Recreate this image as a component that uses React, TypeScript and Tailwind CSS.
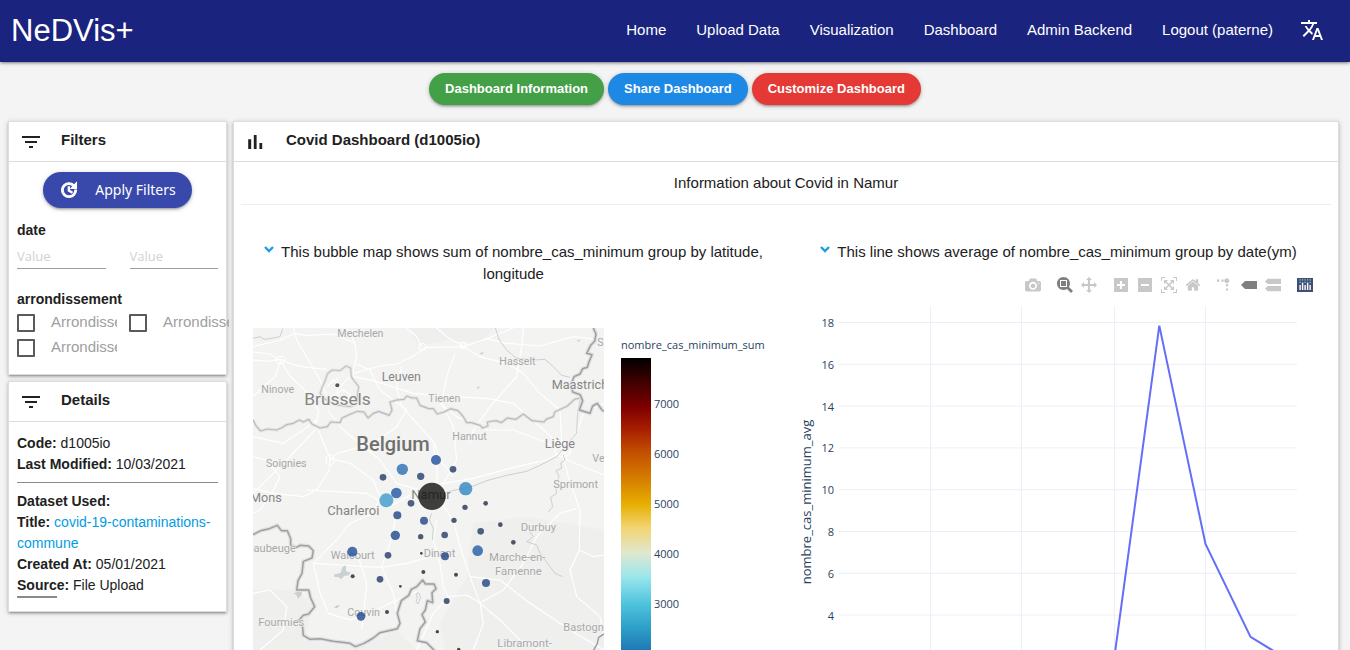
import type { ReactNode } from "react";
import { MdFilterList, MdTranslate } from "react-icons/md";

const NAV = ["Home", "Upload Data", "Visualization", "Dashboard", "Admin Backend", "Logout (paterne)"];

const SHADOW =
  "shadow-[0_2px_2px_0_rgba(0,0,0,0.14),0_3px_1px_-2px_rgba(0,0,0,0.12),0_1px_5px_0_rgba(0,0,0,0.2)]";

function BarsIcon() {
  return (
    <svg viewBox="0 0 24 24" className="size-6 fill-current">
      <path d="M4.2 9.2h3V19h-3zM9.8 5h2.8v14H9.8zm5.6 8h2.8v6h-2.8z" />
    </svg>
  );
}

function UpdateIcon() {
  return (
    <svg viewBox="0 0 24 24" className="size-5" fill="currentColor" stroke="currentColor" strokeWidth="1.3">
      <path d="M21 10.12h-6.78l2.74-2.82c-2.73-2.7-7.15-2.8-9.88-.1-2.73 2.71-2.73 7.08 0 9.79s7.15 2.71 9.88 0C18.32 15.65 19 14.08 19 12.1h2c0 1.98-.88 4.55-2.64 6.29-3.51 3.48-9.21 3.48-12.72 0-3.5-3.47-3.53-9.11-.02-12.58s9.14-3.47 12.65 0L21 3v7.12zM12.5 8v4.25l3.5 2.08-.72 1.21L11 13V8h1.5z" />
    </svg>
  );
}

function Card({ icon, title, children }: { icon: ReactNode; title: string; children: ReactNode }) {
  return (
    <section className={`border border-[#dddddd] bg-white ${SHADOW}`}>
      <h2 className="flex h-10 items-center gap-[18px] border-b border-[#dddddd] px-[10px] pb-0.5 text-[15px] font-bold">
        <span className="mt-0.5 text-2xl">{icon}</span>
        {title}
      </h2>
      {children}
    </section>
  );
}

/* ---------- Filters ---------- */

function Check({ id }: { id: string }) {
  return (
    <div className="flex h-[25px] items-center gap-4 overflow-hidden pb-0.5">
      <input
        id={id}
        type="checkbox"
        className="size-[18px] shrink-0 appearance-none rounded-[1px] border-2 border-[#5a5a5a] bg-white checked:bg-[#5a5a5a]"
      />
      <label htmlFor={id} className="text-[15px] text-[#9e9e9e]">
        Arrondissement
      </label>
    </div>
  );
}

function Filters() {
  return (
    <Card icon={<MdFilterList />} title="Filters">
      <form className="flex flex-col px-2 pt-[10px] pb-[13px]">
        <button
          type="button"
          className={`flex h-9 items-center gap-4 self-center rounded-full bg-[#3949ab] px-4 font-['Noto_Sans',sans-serif] text-sm text-white ${SHADOW}`}
        >
          <UpdateIcon />
          Apply Filters
        </button>
        <h3 className="mt-3 text-sm font-bold">date</h3>
        <div className="grid grid-cols-2 gap-x-6">
          {["Start date", "End date"].map((name) => (
            <input
              key={name}
              aria-label={name}
              placeholder="Value"
              className="h-[29px] w-full min-w-0 border-b border-[#9e9e9e] bg-transparent pt-1 font-['Open_Sans',sans-serif] text-[13px] outline-none placeholder:text-[#d1d1d1]"
            />
          ))}
        </div>
        <h3 className="mt-5 mb-0.5 text-sm font-bold">arrondissement</h3>
        <div className="grid grid-cols-[100px_100px] gap-x-3">
          <Check id="arr-1" />
          <Check id="arr-2" />
          <Check id="arr-3" />
        </div>
      </form>
    </Card>
  );
}

/* ---------- Details ---------- */

function Details() {
  return (
    <Card icon={<MdFilterList />} title="Details">
      <div className="px-2 pt-[11px] pb-[13px] text-sm leading-[21px]">
        <p><b>Code:</b> d1005io</p>
        <p><b>Last Modified:</b> 10/03/2021</p>
        <hr className="mt-[7px] mb-2 border-[#8a8a8a]" />
        <p><b>Dataset Used:</b></p>
        <p>
          <b>Title:</b>{" "}
          <a href="#dataset" className="text-[#039be5]">covid-19-contaminations-commune</a>
        </p>
        <p><b>Created At:</b> 05/01/2021</p>
        <p><b>Source:</b> File Upload</p>
        <hr className="w-10 border-t-2 border-[#8a8a8a]" />
      </div>
    </Card>
  );
}

/* ---------- Bubble map ---------- */

type Label = [text: string, x: number, y: number, size: number, fill: string];
const SOFT = "#a8a8a8";
const MID = "#858585";
const LABELS: Label[] = [
  ["Mechelen", 292, 321, 32, SOFT],
  ["Ninove", 64, 488, 32, SOFT],
  ["Brussels", 193, 525, 52, MID],
  ["Leuven", 425, 453, 37, MID],
  ["Tienen", 565, 515, 32, SOFT],
  ["Hasselt", 778, 405, 32, SOFT],
  ["Maastricht", 935, 477, 38, MID],
  ["S", 1072, 347, 32, SOFT],
  ["Hannut", 637, 629, 32, SOFT],
  ["Liège", 914, 653, 38, MID],
  ["Soignies", 78, 710, 32, SOFT],
  ["Verviers", 1057, 695, 32, SOFT],
  ["Sprimont", 940, 774, 33, SOFT],
  ["Namur", 514, 806, 39, MID],
  ["Mons", 30, 816, 38, MID],
  ["Charleroi", 262, 854, 39, MID],
  ["Durbuy", 842, 904, 34, SOFT],
  ["Maubeuge", 12, 966, 33, SOFT],
  ["Walcourt", 272, 987, 33, SOFT],
  ["Dinant", 551, 981, 33, SOFT],
  ["Marche-en-", 747, 992, 34, SOFT],
  ["Famenne", 765, 1034, 34, SOFT],
  ["Couvin", 322, 1158, 32, SOFT],
  ["Fourmies", 55, 1188, 33, SOFT],
  ["Bastogne", 970, 1202, 33, SOFT],
  ["Libramont-", 772, 1250, 34, SOFT],
];

const BUBBLES: [number, number, number, string][] = [
  [292, 466, 6, "#222222"], [588, 690, 15, "#17479a"], [487, 718, 17, "#2068b2"], [639, 718, 10, "#1c3563"],
  [429, 742, 10, "#1c3563"], [542, 739, 11, "#1c3968"], [677, 776, 20, "#2a83be"], [576, 799, 41, "#080808"],
  [469, 789, 16, "#184e9f"], [439, 811, 21, "#3598c9"], [513, 820, 10, "#1c3563"], [675, 832, 8, "#1d2c4b"],
  [737, 820, 7, "#1b2640"], [472, 856, 12, "#193d80"], [552, 872, 12, "#193d80"], [642, 871, 8, "#1d2c4b"],
  [781, 884, 7, "#1b2640"], [722, 904, 10, "#1c3563"], [466, 916, 14, "#17428a"], [542, 920, 8, "#1d2c4b"],
  [614, 915, 10, "#1c3563"], [820, 937, 7, "#1b2640"], [337, 965, 15, "#17479a"], [444, 976, 10, "#1c3563"],
  [544, 970, 4, "#111111"], [615, 979, 12, "#193d80"], [713, 962, 16, "#1a56a6"], [550, 1026, 6, "#151a28"],
  [648, 1034, 6, "#151a28"], [338, 1039, 6, "#151a28"], [420, 1048, 10, "#1c3563"], [481, 1069, 4, "#111111"],
  [738, 1059, 12, "#193d80"], [620, 1113, 9, "#1d3055"], [441, 1146, 6, "#151a28"], [363, 1159, 13, "#17428a"],
  [592, 1205, 5, "#111111"], [656, 1258, 5, "#111111"],
];

const ROADS = [
  "M39 390 L80 394 L122 388 L160 404 L200 412 L262 418",
  "M39 366 L90 372 L122 392 L150 438 L215 500 L236 545 L225 600 L150 680 L60 770 L39 790",
  "M122 392 L105 440 L60 480 L39 500",
  "M160 294 L170 330 L205 390 L235 440 L262 500",
  "M320 294 L345 340 L350 380 L338 430 L355 480",
  "M345 340 L280 312 L200 316 L165 310 L120 330 L39 350",
  "M340 430 L420 408 L470 402 L520 378 L560 352 L670 350 L740 326 L820 294",
  "M545 350 L530 320 L500 294",
  "M670 350 L720 380 L800 400 L850 430 L900 490 L960 540 L965 640 L980 690 L1092 735",
  "M340 440 L400 452 L470 474 L520 490 L640 500 L740 505 L820 520 L900 590 L965 650",
  "M484 410 L470 474 L486 530 L540 590 L585 640 L600 690 L640 740",
  "M645 370 L620 440 L605 520 L640 590 L650 690 L600 780",
  "M850 294 L845 350 L830 440 L750 530 L700 600 L690 640",
  "M672 350 L620 320 L590 294",
  "M740 326 L800 340 L900 348 L1000 320 L1092 330",
  "M345 400 L390 420 L420 480 L500 540 L470 590 L400 640 L290 670 L270 690",
  "M225 570 L250 640 L270 680 L268 720 L230 780 L190 800 L100 790 L39 775",
  "M230 570 L190 600 L130 640 L39 620",
  "M262 540 L310 600 L420 690 L470 760 L540 780 L600 762 L700 745 L830 710 L920 690 L965 665",
  "M270 685 L330 700 L400 750 L420 800 L400 850 L330 880 L290 930 L220 1000",
  "M200 780 L290 785 L380 790 L450 830 L520 790 L590 810",
  "M580 640 L592 720 L590 800 L640 870 L660 950 L690 1040 L720 1120 L780 1170 L840 1230 L900 1260",
  "M590 870 L580 930 L600 1000 L610 1070 L625 1100 L580 1150 L540 1240 L530 1260",
  "M220 1000 L300 1005 L420 1012 L500 1000 L590 975",
  "M470 850 L450 940 L425 1010 L460 1090 L470 1150",
  "M220 1000 L240 1090 L265 1150 L330 1170 L390 1150 L450 1120 L530 1085",
  "M355 980 L380 1060 L372 1140 L365 1200",
  "M625 1100 L680 1095 L720 1118 L790 1080 L850 1000 L890 920 L960 850 L1010 835",
  "M965 665 L985 740 L1020 840 L1018 960 L1060 980 L1092 975",
  "M1018 960 L990 1020 L1010 1100 L1080 1160 L1092 1220",
  "M720 1118 L730 1180 L700 1260",
  "M39 680 L80 690 L120 740 L90 800 L60 840 L39 850",
  "M39 1090 L90 1080 L140 1130 L130 1200 L60 1260",
  "M690 1040 L780 1050 L870 1120 L990 1200 L1092 1260",
  "M965 660 L1010 610 L1030 550 L1092 520",
  "M965 660 L900 630 L820 600 L740 600 L650 560 L600 520",
];

const WATER = [
  "M39 325 L60 320 L72 328 L88 326 L100 324 L120 320 L128 296",
  "M766 294 L778 330 L800 360 L828 384 L880 390 L915 388 L940 410 L965 436 L990 442",
  "M1020 510 L1012 560 L1010 610 L975 650 L950 680 L900 706 L860 724 L800 736 L740 752 L700 768 L620 786",
  "M970 675 L975 690 L962 700 L965 715 L948 722 L958 740 L945 760 L950 790 L932 802 L938 830 L925 846",
  "M870 905 L880 920 L860 935 L890 945 L900 970 L930 1010 L945 1030 L968 1040",
  "M575 850 L568 870 L580 895 L577 930",
];

const REGION =
  "M39 570 L50 590 L62 603 L82 597 L110 600 L124 594 L140 584 L160 580 L178 570 L190 576 L206 568 L216 582 L240 594 L262 590 L272 576 L300 578 L306 564 L332 552 L352 544 L372 546 L384 564 L400 550 L416 544 L448 556 L456 540 L450 516 L470 510 L492 508 L500 498 L516 504 L530 504 L540 526 L566 536 L580 536 L592 552 L612 546 L632 536 L654 542 L670 560 L680 578 L694 578 L720 586 L728 594 L744 588 L742 576 L768 572 L784 578 L802 564 L828 568 L850 552 L876 572 L912 576 L918 568 L940 560 L944 546 L982 528 L1004 508 L1020 504";
const BRUSSELS =
  "M262 432 L276 420 L300 422 L318 408 L332 414 L334 440 L342 452 L356 470 L352 500 L350 522 L330 530 L300 526 L284 524 L256 508 L240 490 L248 468 L254 456 Z";
const DUTCH =
  "M1060 294 L1068 312 L1064 334 L1052 346 L1040 370 L1056 374 L1046 398 L1042 412 L1028 416 L1020 432 L1002 440 L994 462 L998 486 L1020 494 L1028 512 L1018 540 L1050 550 L1058 528 L1072 520 L1086 540 L1092 544";
const FRANCE =
  "M39 914 L62 902 L88 896 L112 886 L124 902 L142 902 L152 926 L152 946 L170 952 L180 946 L206 948 L220 962 L216 984 L190 994 L186 1030 L174 1052 L170 1080 L206 1080 L212 1104 L224 1130 L206 1152 L190 1156 L176 1172 L188 1192 L190 1216 L210 1228 L240 1226 L280 1234 L330 1240 L346 1250 L372 1240 L400 1224 L420 1208 L472 1196 L480 1180 L472 1150 L484 1112 L506 1096 L514 1078 L530 1070 L548 1050 L556 1062 L582 1062 L588 1076 L576 1088 L578 1118 L562 1112 L556 1140 L546 1154 L556 1176 L540 1196 L532 1232 L560 1238 L584 1262 L600 1290";

function BelgiumMap() {
  return (
    <svg x="12" y="31" width="351" height="369" viewBox="39 294 1053 1107" fontFamily="Roboto, sans-serif">
      <rect x="39" y="294" width="1053" height="1107" fill="#f3f3f2" />
      <g fill="#ececeb">
        <path d="M500 294 L760 294 L720 340 L620 330 L540 350 Z" opacity=".6" />
        <path d="M700 880 L860 860 L1092 900 L1092 1401 L640 1401 L600 1180 L680 1040 Z" opacity=".6" />
        <path d="M39 1080 L170 1080 L220 1130 L190 1230 L360 1250 L470 1200 L530 1260 L560 1401 L39 1401 Z" opacity=".6" />
      </g>
      <g fill="none" stroke="#ffffff" strokeWidth="3.5" strokeLinejoin="round">
        {ROADS.map((d) => <path key={d} d={d} />)}
        <ellipse cx="122" cy="390" rx="14" ry="11" />
        <ellipse cx="547" cy="350" rx="10" ry="9" />
        <ellipse cx="670" cy="346" rx="9" ry="9" />
        <ellipse cx="270" cy="690" rx="12" ry="16" />
        <ellipse cx="968" cy="660" rx="24" ry="20" />
        <path d="M262 470 L280 450 L300 470 L330 440 M270 500 L310 480 L340 500 M292 440 V520" />
      </g>
      <g fill="none" stroke="#c9d1d3" strokeWidth="3" strokeLinejoin="round">
        {WATER.map((d) => <path key={d} d={d} />)}
      </g>
      <g fill="#c9d1d3">
        <path d="M282 1034 l20 -6 l6 -18 l10 -4 l0 18 l14 4 l-6 8 l-14 2 l-8 10 l-8 -6 l-14 -2 z" />
        <path d="M282 1134 l8 -8 l10 0 l-8 8 z M160 1090 l12 -4 l14 0 l-2 10 l-10 10 l-4 -10 z" />
        <path d="M708 474 l12 -6 l-4 8 z M718 370 l14 -4 l-6 8 z M1010 332 l10 -4 l-2 8 z" />
      </g>
      <path d="M528 1092 l8 -4 l6 14 l-8 20 l-6 -6 l4 -14 z" fill="none" stroke="#c9d1d3" strokeWidth="3" />
      <g fill="none" strokeLinejoin="round">
        <path d={REGION} stroke="#e6e6e6" strokeWidth="10" />
        <path d={REGION} stroke="#bababa" strokeWidth="3.5" />
        <path d={BRUSSELS} stroke="#e6e6e6" strokeWidth="9" />
        <path d={BRUSSELS} stroke="#c4c4c4" strokeWidth="3.5" />
        <path d={DUTCH} stroke="#e0e0e0" strokeWidth="12" />
        <path d={DUTCH} stroke="#9f9f9f" strokeWidth="4.5" />
        <path d={FRANCE} stroke="#e0e0e0" strokeWidth="12" />
        <path d={FRANCE} stroke="#9f9f9f" strokeWidth="4.5" />
        <path d="M1092 1212 L1076 1222 L1072 1240 L1060 1262" stroke="#9f9f9f" strokeWidth="4.5" />
      </g>
      <g stroke="#f4f4f3" strokeWidth="4" strokeLinejoin="round" paintOrder="stroke">
        {LABELS.map(([text, x, y, size, fill]) => (
          <text key={text} x={x} y={y} fontSize={size} fill={fill}>{text}</text>
        ))}
        <text x="349" y="662" fontSize="60" fontWeight="500" fill="#707070">Belgium</text>
      </g>
      <g opacity=".77">
        {BUBBLES.map(([x, y, r, fill]) => <circle key={`${x}-${y}`} cx={x} cy={y} r={r} fill={fill} />)}
      </g>
    </svg>
  );
}

const SCALE: [number, string][] = [
  [0, "#000000"], [25, "#430000"], [50, "#800000"], [72, "#a92000"], [95, "#c35000"], [119, "#d57a00"],
  [146, "#e6ae00"], [170, "#f3d573"], [195, "#dfe8cf"], [219, "#9ae6ec"], [245, "#50c5dd"],
  [269, "#2fa0c9"], [292, "#1f7ab5"], [339, "#174089"],
];

function BubbleMap() {
  return (
    <svg viewBox="0 0 545 400" className="mt-3 w-full" role="img" aria-label="Bubble map">
      <defs>
        <linearGradient id="cases" x1="0" x2="0" y1="0" y2="1">
          {SCALE.map(([at, color]) => <stop key={at} offset={at / 339} stopColor={color} />)}
        </linearGradient>
      </defs>
      <BelgiumMap />
      <rect x="380" y="61" width="30" height="339" fill="url(#cases)" />
      <g fontFamily="'Open Sans', sans-serif" fontSize="11" fill="#2a3f5f">
        <text x="380" y="52">nombre_cas_minimum_sum</text>
        {[7000, 6000, 5000, 4000, 3000].map((v, i) => (
          <text key={v} x="413" y={111 + i * 50}>{v}</text>
        ))}
      </g>
    </svg>
  );
}

/* ---------- Line chart ---------- */

type Tool = { name: string; w?: number; d: string; on?: boolean; k?: number };
const TOOLS: Tool[][] = [
  [{ name: "Download plot", d: "m500 450c-83 0-150-67-150-150 0-83 67-150 150-150 83 0 150 67 150 150 0 83-67 150-150 150z m400 150h-120c-16 0-34 13-39 29l-31 93c-6 15-23 28-40 28h-340c-16 0-34-13-39-28l-31-94c-6-15-23-28-40-28h-120c-55 0-100-45-100-100v-450c0-55 45-100 100-100h800c55 0 100 45 100 100v450c0 55-45 100-100 100z m-400-550c-138 0-250 112-250 250 0 138 112 250 250 250 138 0 250-112 250-250 0-138-112-250-250-250z m365 380c-19 0-35 16-35 35 0 19 16 35 35 35 19 0 35-16 35-35 0-19-16-35-35-35z" }],
  [
    { name: "Zoom", on: true, d: "m1000-25l-250 251c40 63 63 138 63 218 0 224-182 406-407 406-224 0-406-182-406-406s183-406 407-406c80 0 155 22 218 62l250-250 125 125z m-812 250l0 438 437 0 0-438-437 0z m62 375l313 0 0-312-313 0 0 312z" },
    { name: "Pan", d: "m1000 350l-187 188 0-125-250 0 0 250 125 0-188 187-187-187 125 0 0-250-250 0 0 125-188-188 186-187 0 125 252 0 0-250-125 0 187-188 188 188-125 0 0 250 250 0 0-126 187 188z" },
  ],
  [
    { name: "Zoom in", w: 875, d: "m1 787l0-875 875 0 0 875-875 0z m687-500l-187 0 0-187-125 0 0 187-188 0 0 125 188 0 0 187 125 0 0-187 187 0 0-125z" },
    { name: "Zoom out", w: 875, d: "m0 788l0-876 875 0 0 876-875 0z m688-500l-500 0 0 125 500 0 0-125z" },
    { name: "Autoscale", d: "m250 850l-187 0-63 0 0-62 0-188 63 0 0 188 187 0 0 62z m688 0l-188 0 0-62 188 0 0-188 62 0 0 188 0 62-62 0z m-875-938l0 188-63 0 0-188 0-62 63 0 187 0 0 62-187 0z m875 188l0-188-188 0 0-62 188 0 62 0 0 62 0 188-62 0z m-125 188l-1 0-93-94-156 156 156 156 92-93 2 0 0 250-250 0 0-2 93-92-156-156-156 156 94 92 0 2-250 0 0-250 0 0 93 93 157-156-157-156-93 94 0 0 0-250 250 0 0 0-94 93 156 157 156-157-93-93 0 0 250 0 0 250z" },
    { name: "Reset axes", w: 929, d: "m786 296v-267q0-15-11-26t-25-10h-214v214h-143v-214h-214q-15 0-25 10t-11 26v267q0 1 0 2t0 2l321 264 321-264q1-1 1-4z m124 39l-34-41q-5-5-12-6h-2q-7 0-12 3l-386 322-386-322q-7-4-13-4-7 2-12 7l-35 41q-4 5-3 13t6 12l401 334q18 15 42 15t43-15l136-114v109q0 8 5 13t13 5h107q8 0 13-5t5-13v-227l122-102q5-5 6-12t-4-13z" },
  ],
  [
    { name: "Toggle spike lines", k: 1.5, d: "M512 409c0-57-46-104-103-104-57 0-104 47-104 104 0 57 47 103 104 103 57 0 103-46 103-103z m-327-39l92 0 0 92-92 0z m-185 0l92 0 0 92-92 0z m370-186l92 0 0 93-92 0z m0-184l92 0 0 92-92 0z" },
    { name: "Show closest data", w: 1500, on: true, d: "m375 725l0 0-375-375 375-374 0-1 1125 0 0 750-1125 0z" },
    { name: "Compare data", w: 1125, d: "m187 786l0 2-187-188 188-187 0 0 937 0 0 373-938 0z m0-499l0 1-187-188 188-188 0 0 937 0 0 376-938-1z" },
  ],
];

function Toolbar() {
  return (
    <div className="flex h-6 items-center justify-end gap-2 pr-[14px]">
      {TOOLS.map((group) => (
        <div key={group[0].name} className="flex">
          {group.map(({ name, w = 1000, d, on, k = 1 }) => (
            <button key={name} type="button" aria-label={name} className="flex w-6 justify-center">
              <svg viewBox={`0 0 ${w} 1000`} className={on ? "size-4 fill-[#7f7f7f]" : "size-4 fill-[#c8c8c8]"}>
                <path d={d} transform={`matrix(${k} 0 0 ${-k} 0 850)`} />
              </svg>
            </button>
          ))}
        </div>
      ))}
      <a href="#plotly" aria-label="Produced with Plotly" className="flex w-6 justify-center">
        <svg viewBox="0 0 16 16" className="size-4">
          <rect y="1" width="16" height="14" fill="#3f4f75" />
          <g fill="#8fd6cf">
            {[2.5, 5, 7.5, 10, 12.5].map((x) => <rect key={x} x={x} y="2.3" width="1.2" height="1.2" />)}
            {[2.5, 7.5, 12.5].map((x) => <rect key={x} x={x} y="4.8" width="1.2" height="1.2" />)}
          </g>
          <g fill="#ffffff">
            <rect x="2.4" y="8" width="1.4" height="5" />
            <rect x="4.9" y="5.6" width="1.4" height="7.4" />
            <rect x="7.4" y="8" width="1.4" height="5" />
            <rect x="9.9" y="5.6" width="1.4" height="7.4" />
            <rect x="12.4" y="8" width="1.4" height="5" />
          </g>
        </svg>
      </a>
    </div>
  );
}

const TICKS = [18, 16, 14, 12, 10, 8, 6, 4];
const yOf = (v: number) => 25.5 + (18 - v) * 20.9;
const POINTS: [number, number][] = [
  [53, 0.2], [97, 0.8], [144, 0.6], [189, 0.9], [235.5, 1.2], [282, 0.9], [327, 1.5], [373.3, 17.85],
  [419.5, 7.4], [464.5, 2.96], [511, 1.6],
];

function LineChart() {
  return (
    <svg viewBox="0 0 545 400" className="w-full" role="img" aria-label="Line chart">
      <g stroke="#ebf0f8" strokeWidth="1">
        {TICKS.map((v) => <path key={v} d={`M53 ${yOf(v)} H511`} />)}
        {[144.5, 235.5, 328.5, 419.5].map((x) => <path key={x} d={`M${x} 9 V400`} />)}
      </g>
      <polyline
        points={POINTS.map(([x, v]) => `${x},${yOf(v)}`).join(" ")}
        fill="none"
        stroke="#636efa"
        strokeWidth="2"
      />
      <g fontFamily="'Open Sans', sans-serif" fill="#2a3f5f">
        <g fontSize="11" textAnchor="end">
          {TICKS.map((v) => <text key={v} x="48" y={yOf(v) + 4.5}>{v}</text>)}
        </g>
        <text transform="translate(25 205) rotate(-90)" textAnchor="middle" fontSize="13">
          nombre_cas_minimum_avg
        </text>
      </g>
    </svg>
  );
}

function PlotTitle({ children }: { children: ReactNode }) {
  return (
    <h3 className="px-4 text-center text-[15px] leading-[22px]">
      <button type="button" aria-label="Toggle plot" className="mr-[7px] align-[4px]">
        <svg viewBox="0 0 10 7" className="h-[7px] w-[10px]">
          <path d="M1 1 L5 5 L9 1" fill="none" stroke="#1e9be9" strokeWidth="2.4" />
        </svg>
      </button>
      {children}
    </h3>
  );
}

export default function App() {
  return (
    <div className="h-screen overflow-x-hidden overflow-y-auto bg-[#f4f4f4] font-['Liberation_Sans',Arial,sans-serif] text-[#212121] [scrollbar-width:none]">
      <header className={`relative flex h-[62px] items-center justify-between bg-[#1a237e] pr-[26px] pb-0.5 pl-[11px] text-white ${SHADOW}`}>
        <a href="#top" className="text-[31px] leading-none">NeDVis+</a>
        <nav className="flex items-center gap-[30px] text-[15px]">
          {NAV.map((item) => <a key={item} href="#nav">{item}</a>)}
          <button type="button" aria-label="Change language" className="-ml-[3px]">
            <MdTranslate className="size-6" />
          </button>
        </nav>
      </header>

      <div className="flex justify-center gap-1 pt-[11px] pb-4 text-[13px] font-bold text-white">
        <button type="button" className={`h-8 rounded-full bg-[#43a047] px-4 ${SHADOW}`}>Dashboard Information</button>
        <button type="button" className={`h-8 rounded-full bg-[#1e88e5] px-4 ${SHADOW}`}>Share Dashboard</button>
        <button type="button" className={`h-8 rounded-full bg-[#e53935] px-4 ${SHADOW}`}>Customize Dashboard</button>
      </div>

      <div className="flex items-start gap-[6px] pr-[11px] pb-4 pl-2">
        <aside className="flex w-[219px] shrink-0 flex-col gap-[6px]">
          <Filters />
          <Details />
        </aside>
        <main className="min-w-0 flex-1">
          <Card icon={<BarsIcon />} title="Covid Dashboard (d1005io)">
            <div className="px-[7px]">
              <p className="border-b border-[#eeeeee] pt-[10px] pb-[10px] text-center text-[15px] leading-[22px]">
                Information about Covid in Namur
              </p>
              <div className="grid grid-cols-2 pt-9">
                <div className="min-w-0">
                  <PlotTitle>
                    This bubble map shows sum of nombre_cas_minimum group by latitude, longitude
                  </PlotTitle>
                  <BubbleMap />
                </div>
                <div className="min-w-0">
                  <PlotTitle>This line shows average of nombre_cas_minimum group by date(ym)</PlotTitle>
                  <div className="pt-[10px]">
                    <Toolbar />
                    <LineChart />
                  </div>
                </div>
              </div>
            </div>
          </Card>
        </main>
      </div>
    </div>
  );
}
